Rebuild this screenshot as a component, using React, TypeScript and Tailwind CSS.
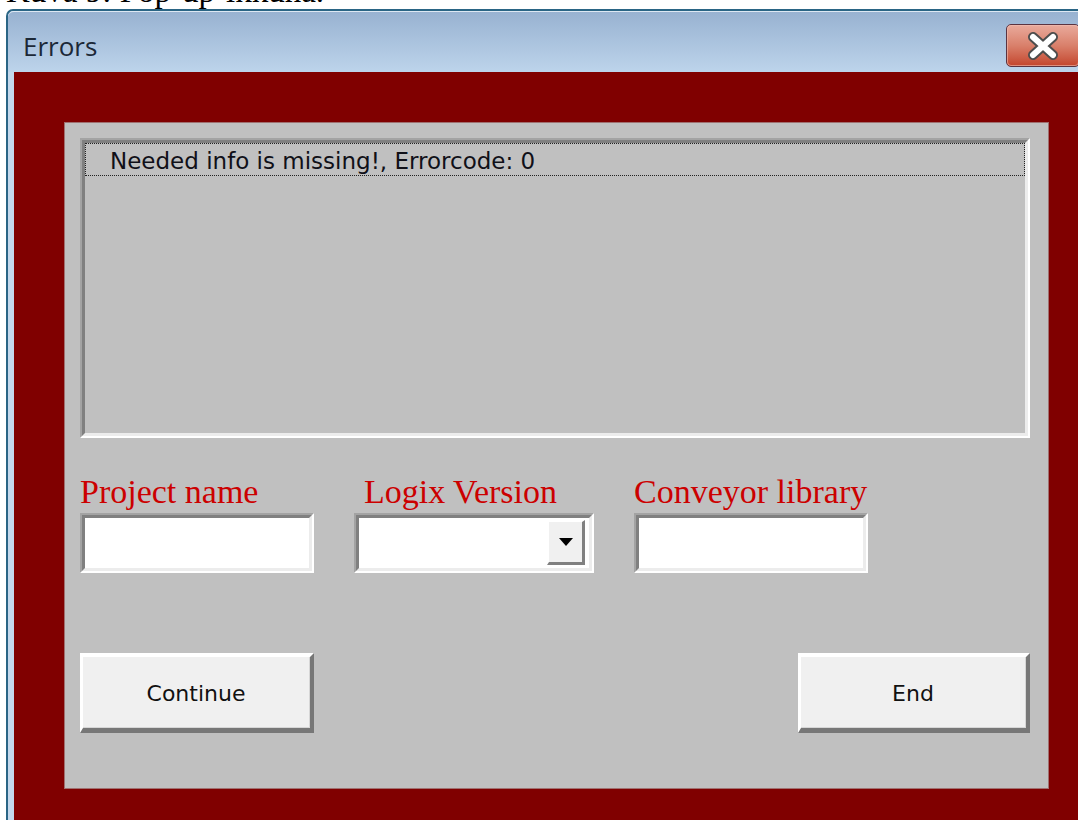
import React from "react";

const Sunken = ({ className = "", children, fill = "bg-white" }: { className?: string; children?: React.ReactNode; fill?: string }) => (
  <div className={`border-2 border-t-[#a3a3a3] border-l-[#a3a3a3] border-r-white border-b-white ${className}`}>
    <div className={`h-full border-[3px] border-t-[#808080] border-l-[#808080] border-r-[#ececec] border-b-[#ececec] ${fill}`}>
      {children}
    </div>
  </div>
);

const Label = ({ text, indent = "" }: { text: string; indent?: string }) => (
  <div className={`flex h-[75px] items-end pb-[4px] ${indent}`}>
    <span className="font-['Liberation_Serif',serif] text-[34px] leading-none text-[#cc0000]">
      {text}
    </span>
  </div>
);

const PushButton = ({ label, width }: { label: string; width: string }) => (
  <button
    className={`h-[80px] ${width} border-t-4 border-l-[3px] border-b-[5px] border-r-4 border-t-white border-l-white border-b-[#777777] border-r-[#777777] bg-[#f0f0f0]`}
  >
    <div className="flex h-full items-center justify-center border-b border-r border-[#d6d6d6] pt-[3px] font-['DejaVu_Sans',sans-serif] text-[22px] text-[#111]">
      {label}
    </div>
  </button>
);

const CloseButton = () => (
  <div className="mt-[12px] mr-[16px] h-[43px] w-[74px] rounded-[5px] border border-[#5b3340] bg-gradient-to-b from-[#e9aa9c] via-[#d9806b] to-[#c3442c]">
    <div className="flex h-full items-center justify-center rounded-[4px] border border-[#f0c0b4]/60">
      <svg width="32" height="28" viewBox="0 0 32 28">
        <g strokeLinecap="round">
          <path d="M6 5 L26 23 M26 5 L6 23" stroke="#4d4d4d" strokeWidth="10" />
          <path d="M6 5 L26 23 M26 5 L6 23" stroke="#ffffff" strokeWidth="6" />
        </g>
      </svg>
    </div>
  </div>
);

export default function App() {
  return (
    <div className="h-[820px] w-[1078px] overflow-hidden bg-white">
      {/* caption line above the window, mostly scrolled off */}
      <div className="h-[9px] overflow-hidden pl-[6px]">
        <div className="mt-[-25px] font-['Liberation_Serif',serif] text-[33px] leading-none text-black">
          Kuva 9: Pop-up-ikkuna.
        </div>
      </div>

      <div className="ml-[6px] flex h-[811px] w-[1090px] flex-col rounded-tl-[7px] border-l-2 border-t-2 border-[#2a6585] bg-[#c2d7ec]">
        <div className="flex h-[61px] justify-between rounded-tl-[6px] border-t border-[#dde8f3] bg-gradient-to-b from-[#98b2d1] to-[#bdd4eb]">
          <span className="ml-[15px] mt-[21px] font-['Open_Sans',sans-serif] text-[26px] leading-none text-[#1c2837]">
            Errors
          </span>
          <CloseButton />
        </div>

        <div className="flex-1 border-l-[6px] border-[#c4d8ec] bg-[#800000] pl-[50px] pt-[50px]">
          <div className="flex h-[667px] w-[985px] flex-col border border-[#a07070] bg-[#c0c0c0] pl-[15px] pt-[15px]">
            <Sunken className="h-[300px] w-[950px]" fill="bg-[#c0c0c0]">
              <div className="flex h-[33px] items-center border border-dotted border-[#222] pl-[24px] pt-[3px] font-['DejaVu_Sans',sans-serif] text-[23px] leading-none text-[#101018]">
                Needed info is missing!, Errorcode: 0
              </div>
            </Sunken>

            <div className="flex gap-10">
              <div className="flex flex-col">
                <Label text="Project name" />
                <Sunken className="h-[60px] w-[234px]" />
              </div>
              <div className="flex flex-col">
                <Label text="Logix Version" indent="pl-[10px]" />
                <Sunken className="h-[60px] w-[240px]">
                  <div className="flex h-full justify-end pt-[2px] pr-[4px]">
                    <div className="h-[45px] w-[38px] border-t-2 border-l-2 border-b-[3px] border-r-[3px] border-t-white border-l-white border-b-[#808080] border-r-[#808080] bg-[#f0f0f0]">
                      <div className="flex h-full items-center justify-center">
                        <svg width="14" height="8" viewBox="0 0 14 8">
                          <path d="M0 0 H14 L7 8 Z" fill="#000" />
                        </svg>
                      </div>
                    </div>
                  </div>
                </Sunken>
              </div>
              <div className="flex flex-col">
                <Label text="Conveyor library" />
                <Sunken className="h-[60px] w-[234px]" />
              </div>
            </div>

            <div className="mt-[80px] flex w-[950px] justify-between">
              <PushButton label="Continue" width="w-[234px]" />
              <PushButton label="End" width="w-[232px]" />
            </div>
          </div>
        </div>
      </div>
    </div>
  );
}
